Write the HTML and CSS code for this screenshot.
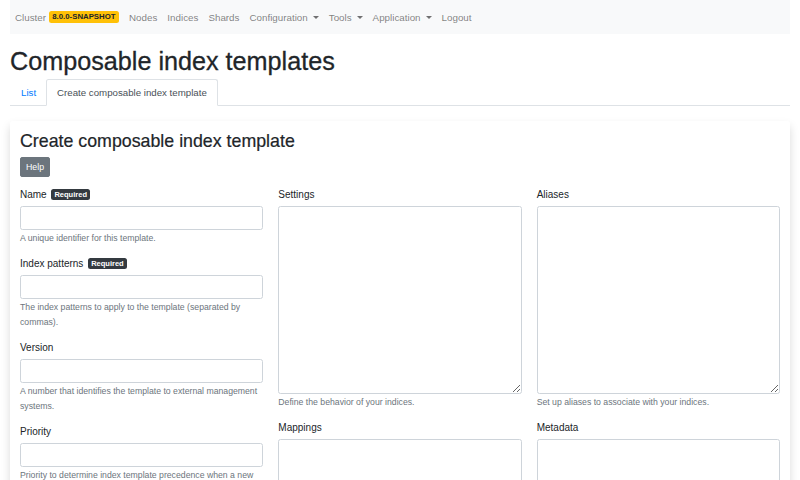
FILE: index.html
```html
<!DOCTYPE html>
<html>
<head>
<meta charset="utf-8">
<link rel="stylesheet" href="styles.css">
</head>
<body>
<div class="page">
  <nav class="navbar">
    <span class="nav-item">Cluster&nbsp;<span class="badge badge-warning">8.0.0-SNAPSHOT</span></span>
    <span class="nav-item">Nodes</span>
    <span class="nav-item">Indices</span>
    <span class="nav-item">Shards</span>
    <span class="nav-item dropdown">Configuration</span>
    <span class="nav-item dropdown">Tools</span>
    <span class="nav-item dropdown">Application</span>
    <span class="nav-item">Logout</span>
  </nav>
  <h1 class="title">Composable index templates</h1>
  <ul class="tabs">
    <li class="tab link">List</li>
    <li class="tab active">Create composable index template</li>
  </ul>
  <div class="card">
    <h3 class="card-title">Create composable index template</h3>
    <button class="btn">Help</button>
    <div class="grid">
      <div class="col">
        <div class="group">
          <label class="label">Name&nbsp;<span class="badge badge-dark">Required</span></label>
          <input class="input" type="text">
          <div class="help">A unique identifier for this template.</div>
        </div>
        <div class="group">
          <label class="label">Index patterns&nbsp;<span class="badge badge-dark">Required</span></label>
          <input class="input" type="text">
          <div class="help">The index patterns to apply to the template (separated by commas).</div>
        </div>
        <div class="group">
          <label class="label">Version</label>
          <input class="input" type="text">
          <div class="help">A number that identifies the template to external management systems.</div>
        </div>
        <div class="group">
          <label class="label">Priority</label>
          <input class="input" type="text">
          <div class="help">Priority to determine index template precedence when a new data stream or index is created.</div>
        </div>
      </div>
      <div class="col">
        <div class="group">
          <label class="label">Settings</label>
          <textarea class="textarea"></textarea>
          <div class="help">Define the behavior of your indices.</div>
        </div>
        <div class="group">
          <label class="label">Mappings</label>
          <textarea class="textarea"></textarea>
          <div class="help">Define how to store and index documents.</div>
        </div>
      </div>
      <div class="col">
        <div class="group">
          <label class="label">Aliases</label>
          <textarea class="textarea"></textarea>
          <div class="help">Set up aliases to associate with your indices.</div>
        </div>
        <div class="group">
          <label class="label">Metadata</label>
          <textarea class="textarea"></textarea>
          <div class="help">Optional user metadata about the index template.</div>
        </div>
      </div>
    </div>
  </div>
</div>
</body>
</html>
```
FILE: styles.css
```css
html, body {
  margin: 0;
  background: #fff;
  font-family: "Liberation Sans", Arial, sans-serif;
  font-size: 10px;
  color: #212529;
  overflow: hidden;
  height: 480px;
}
.page {
  padding: 0 10px;
}
.navbar {
  background: #f8f9fa;
  height: 34px;
  display: flex;
  align-items: center;
  padding: 0 5px;
  gap: 10px;
  font-size: 9.8px;
  color: rgba(0,0,0,.5);
}
.nav-item {
  display: inline-flex;
  align-items: center;
  line-height: 15px;
}
.dropdown::after {
  content: "";
  display: inline-block;
  margin-left: 5px;
  border-top: 3px solid rgba(0,0,0,.55);
  border-left: 3px solid transparent;
  border-right: 3px solid transparent;
}
.badge {
  display: inline-block;
  font-weight: bold;
  font-size: 7.5px;
  line-height: 1;
  padding: 2px 3px;
  border-radius: 2.5px;
}
.badge-warning {
  background: #ffc107;
  color: #212529;
  font-size: 7.8px;
  padding: 2px 3.5px;
}
.badge-dark {
  background: #343a40;
  color: #fff;
  margin-left: 2px;
}
.title {
  margin: 12px 0 3px;
  font-size: 25.2px;
  font-weight: 500;
  line-height: 1.2;
  -webkit-text-stroke: 0.3px #212529;
}
.tabs {
  list-style: none;
  margin: 0;
  padding: 0;
  display: flex;
  border-bottom: 1px solid #dee2e6;
  font-size: 9.7px;
}
.tab {
  padding: 5px 10px;
  line-height: 15px;
  border: 1px solid transparent;
  border-top-left-radius: 2.5px;
  border-top-right-radius: 2.5px;
  margin-bottom: -1px;
}
.tab.link {
  color: #007bff;
  padding-right: 9px;
}
.tab.active {
  border-color: #dee2e6 #dee2e6 #fff;
  color: #495057;
  background: #fff;
}
.card {
  margin-top: 15px;
  padding: 10px;
  background: #fff;
  box-shadow: 0 5px 10px rgba(0,0,0,.15);
  border-radius: 3px;
}
.card-title {
  margin: 0 0 5px;
  font-size: 17.8px;
  font-weight: 500;
  line-height: 21px;
  -webkit-text-stroke: 0.2px #212529;
}
.btn {
  display: block;
  font-family: inherit;
  font-size: 8.75px;
  color: #fff;
  background: #6c757d;
  border: 1px solid #6c757d;
  border-radius: 2px;
  padding: 2.5px 5px;
  line-height: 13px;
}
.grid {
  display: grid;
  grid-template-columns: repeat(3, 1fr);
  column-gap: 15px;
  margin-top: 10px;
}
.col {
  min-width: 0;
}
.group {
  margin-bottom: 10px;
}
.label {
  display: flex;
  align-items: center;
  line-height: 15px;
  margin-bottom: 4px;
}
.input, .textarea {
  display: block;
  box-sizing: border-box;
  width: 100%;
  margin: 0;
  padding: 3px 6px;
  font-family: inherit;
  font-size: 10px;
  background: #fff;
  border: 1px solid #ced4da;
  border-radius: 2.5px;
}
.input {
  height: 24px;
}
.textarea {
  height: 188px;
  resize: vertical;
}
.help {
  margin-top: 1px;
  font-size: 8.7px;
  line-height: 15px;
  color: #6c757d;
}
```
